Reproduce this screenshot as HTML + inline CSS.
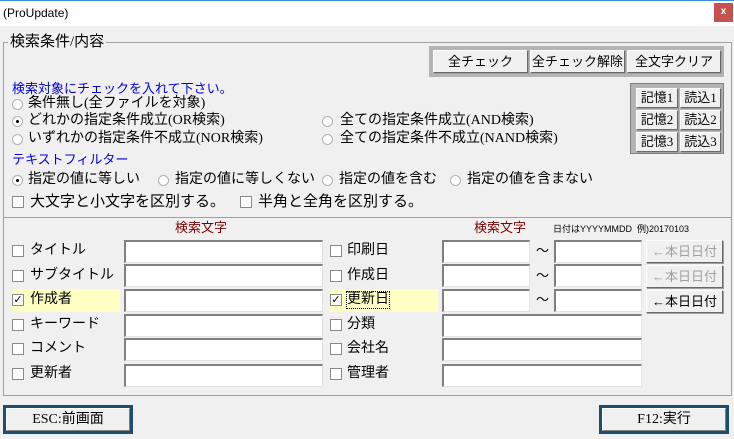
<!DOCTYPE html>
<html><head><meta charset="utf-8"><style>
*{box-sizing:border-box;margin:0;padding:0}
body{width:734px;height:439px;background:#f0f0f0;position:relative;overflow:hidden;font-family:"Liberation Serif","Noto Sans CJK JP",sans-serif;font-size:13px;color:#000}
.a{position:absolute;white-space:nowrap;line-height:16px}
.r{font-size:14px}
.inp{position:absolute;background:#fff;border-top:2px solid #808080;border-left:2px solid #808080;border-right:1px solid #e3e3e3;border-bottom:1px solid #e3e3e3}
.btn{position:absolute;background:#f0f0f0;border:1px solid;border-color:#fff #696969 #696969 #fff;box-shadow:1px 1px 0 #a0a0a0;text-align:center;font-size:13px}
.rad{position:absolute;width:11px;height:11px;border-radius:50%;background:#fff;border:1px solid #b0b0b0}
.rad.on::after{content:"";position:absolute;left:3px;top:3px;width:3px;height:3px;border-radius:50%;background:#000}
.chk{position:absolute;width:12px;height:12px;background:#fff;border:1px solid #8a8a8a;font-size:11px;line-height:10px;text-align:center;font-family:"DejaVu Sans",sans-serif}
.blue{color:#0000e0}
.red{color:#800000}
</style></head><body>
<div style="position:absolute;left:0;top:0;width:734px;height:26px;background:#fff;border-top:1px solid #3c8fd8"></div>
<div class="a" style="left:3px;top:5px;font-family:'Liberation Sans',sans-serif;font-size:12px">(ProUpdate)</div>
<div style="position:absolute;left:714px;top:3px;width:19px;height:19px;background:#c75050;color:#fff;font:bold 10px 'Liberation Sans',sans-serif;text-align:center;line-height:18px">x</div>

<div style="position:absolute;left:3px;top:42px;width:729px;height:354px;border:1px solid #a0a0a0"></div>
<div style="position:absolute;left:3px;top:217px;width:729px;height:1px;background:#a0a0a0"></div>
<div class="a" style="left:8px;top:33px;font-size:15px;line-height:18px;background:#f0f0f0;padding:0 2px">検索条件/内容</div>

<div style="position:absolute;left:429px;top:46px;width:295px;height:31px;background:#b4b4b4"></div>
<div class="btn" style="left:433px;top:50px;width:95px;height:23px;line-height:21px">全チェック</div>
<div class="btn" style="left:530px;top:50px;width:95px;height:23px;line-height:21px">全チェック解除</div>
<div class="btn" style="left:627px;top:50px;width:94px;height:23px;line-height:21px">全文字クリア</div>

<div style="position:absolute;left:630px;top:83px;width:94px;height:71px;background:#b4b4b4;border:1px solid #808080"></div>
<div class="btn" style="left:636px;top:88px;width:42px;height:20px;line-height:18px">記憶1</div>
<div class="btn" style="left:680px;top:88px;width:41px;height:20px;line-height:18px">読込1</div>
<div class="btn" style="left:636px;top:110px;width:42px;height:20px;line-height:18px">記憶2</div>
<div class="btn" style="left:680px;top:110px;width:41px;height:20px;line-height:18px">読込2</div>
<div class="btn" style="left:636px;top:132px;width:42px;height:20px;line-height:18px">記憶3</div>
<div class="btn" style="left:680px;top:132px;width:41px;height:20px;line-height:18px">読込3</div>

<div class="a blue" style="left:12px;top:81px">検索対象にチェックを入れて下さい。</div>
<div class="rad" style="left:12px;top:99px"></div><div class="a r" style="left:28px;top:96px">条件無し(全ファイルを対象)</div>
<div class="rad on" style="left:12px;top:116px"></div><div class="a r" style="left:28px;top:113px">どれかの指定条件成立(OR検索)</div>
<div class="rad" style="left:12px;top:134px"></div><div class="a r" style="left:28px;top:131px">いずれかの指定条件不成立(NOR検索)</div>
<div class="rad" style="left:322px;top:116px"></div><div class="a r" style="left:340px;top:113px">全ての指定条件成立(AND検索)</div>
<div class="rad" style="left:322px;top:134px"></div><div class="a r" style="left:340px;top:131px">全ての指定条件不成立(NAND検索)</div>
<div class="a blue" style="left:12px;top:152px">テキストフィルター</div>
<div class="rad on" style="left:12px;top:175px"></div><div class="a r" style="left:28px;top:172px">指定の値に等しい</div>
<div class="rad" style="left:158px;top:175px"></div><div class="a r" style="left:175px;top:172px">指定の値に等しくない</div>
<div class="rad" style="left:322px;top:175px"></div><div class="a r" style="left:339px;top:172px">指定の値を含む</div>
<div class="rad" style="left:450px;top:175px"></div><div class="a r" style="left:467px;top:172px">指定の値を含まない</div>
<div class="chk" style="left:12px;top:196px"></div><div class="a" style="left:30px;top:194px;font-size:15px">大文字と小文字を区別する。</div>
<div class="chk" style="left:240px;top:196px"></div><div class="a" style="left:258px;top:194px;font-size:15px">半角と全角を区別する。</div>

<div class="a red" style="left:175px;top:220px">検索文字</div>
<div class="a red" style="left:474px;top:220px">検索文字</div>
<div class="a" style="left:553px;top:221px;font-size:9px;font-family:'Liberation Sans','Noto Sans CJK JP',sans-serif">日付はYYYYMMDD&nbsp; 例)20170103</div>

<div style="position:absolute;left:12px;top:289px;width:108px;height:23px;background:#ffffc4"></div>
<div style="position:absolute;left:330px;top:289px;width:108px;height:23px;background:#ffffc4"></div>

<div class="chk" style="left:12px;top:245px"></div><div class="a" style="left:30px;top:243px;font-size:14px">タイトル</div>
<div class="chk" style="left:12px;top:270px"></div><div class="a" style="left:30px;top:268px;font-size:14px">サブタイトル</div>
<div class="chk" style="left:12px;top:294px">✓</div><div class="a" style="left:30px;top:292px;font-size:14px">作成者</div>
<div class="chk" style="left:12px;top:319px"></div><div class="a" style="left:30px;top:317px;font-size:14px">キーワード</div>
<div class="chk" style="left:12px;top:343px"></div><div class="a" style="left:30px;top:341px;font-size:14px">コメント</div>
<div class="chk" style="left:12px;top:368px"></div><div class="a" style="left:30px;top:366px;font-size:14px">更新者</div>

<div class="inp" style="left:124px;top:240px;width:199px;height:23px"></div>
<div class="inp" style="left:124px;top:264px;width:199px;height:23px"></div>
<div class="inp" style="left:124px;top:289px;width:199px;height:23px"></div>
<div class="inp" style="left:124px;top:314px;width:199px;height:23px"></div>
<div class="inp" style="left:124px;top:338px;width:199px;height:23px"></div>
<div class="inp" style="left:124px;top:364px;width:199px;height:23px"></div>

<div class="chk" style="left:330px;top:245px"></div><div class="a" style="left:347px;top:243px;font-size:14px">印刷日</div>
<div class="chk" style="left:330px;top:270px"></div><div class="a" style="left:347px;top:268px;font-size:14px">作成日</div>
<div class="chk" style="left:330px;top:294px">✓</div><div class="a" style="left:347px;top:292px;font-size:14px;outline:1px dotted #000">更新日</div>
<div class="chk" style="left:330px;top:319px"></div><div class="a" style="left:347px;top:317px;font-size:14px">分類</div>
<div class="chk" style="left:330px;top:343px"></div><div class="a" style="left:347px;top:341px;font-size:14px">会社名</div>
<div class="chk" style="left:330px;top:368px"></div><div class="a" style="left:347px;top:366px;font-size:14px">管理者</div>

<div class="inp" style="left:442px;top:240px;width:88px;height:23px"></div>
<div class="inp" style="left:554px;top:240px;width:88px;height:23px"></div>
<div class="inp" style="left:442px;top:264px;width:88px;height:23px"></div>
<div class="inp" style="left:554px;top:264px;width:88px;height:23px"></div>
<div class="inp" style="left:442px;top:289px;width:88px;height:23px"></div>
<div class="inp" style="left:554px;top:289px;width:88px;height:23px"></div>
<div class="a" style="left:536px;top:243px">～</div>
<div class="a" style="left:536px;top:268px">～</div>
<div class="a" style="left:536px;top:292px">～</div>
<div class="inp" style="left:442px;top:314px;width:200px;height:23px"></div>
<div class="inp" style="left:442px;top:338px;width:200px;height:23px"></div>
<div class="inp" style="left:442px;top:364px;width:200px;height:23px"></div>

<div class="btn" style="left:646px;top:240px;width:77px;height:23px;line-height:21px;color:#a0a0a0">←本日日付</div>
<div class="btn" style="left:646px;top:265px;width:77px;height:23px;line-height:21px;color:#a0a0a0">←本日日付</div>
<div class="btn" style="left:646px;top:290px;width:77px;height:23px;line-height:21px">←本日日付</div>

<div style="position:absolute;left:3px;top:405px;width:130px;height:29px;border:3px solid #1f4d6e;background:#f0f0f0"><div style="position:absolute;inset:0;border:1px solid;border-color:#fff #808080 #808080 #fff;text-align:center;line-height:21px;font-size:14px">ESC:前画面</div></div>
<div style="position:absolute;left:599px;top:405px;width:130px;height:29px;border:3px solid #1f4d6e;background:#f0f0f0"><div style="position:absolute;inset:0;border:1px solid;border-color:#fff #808080 #808080 #fff;text-align:center;line-height:21px;font-size:14px">F12:実行</div></div>
</body></html>
